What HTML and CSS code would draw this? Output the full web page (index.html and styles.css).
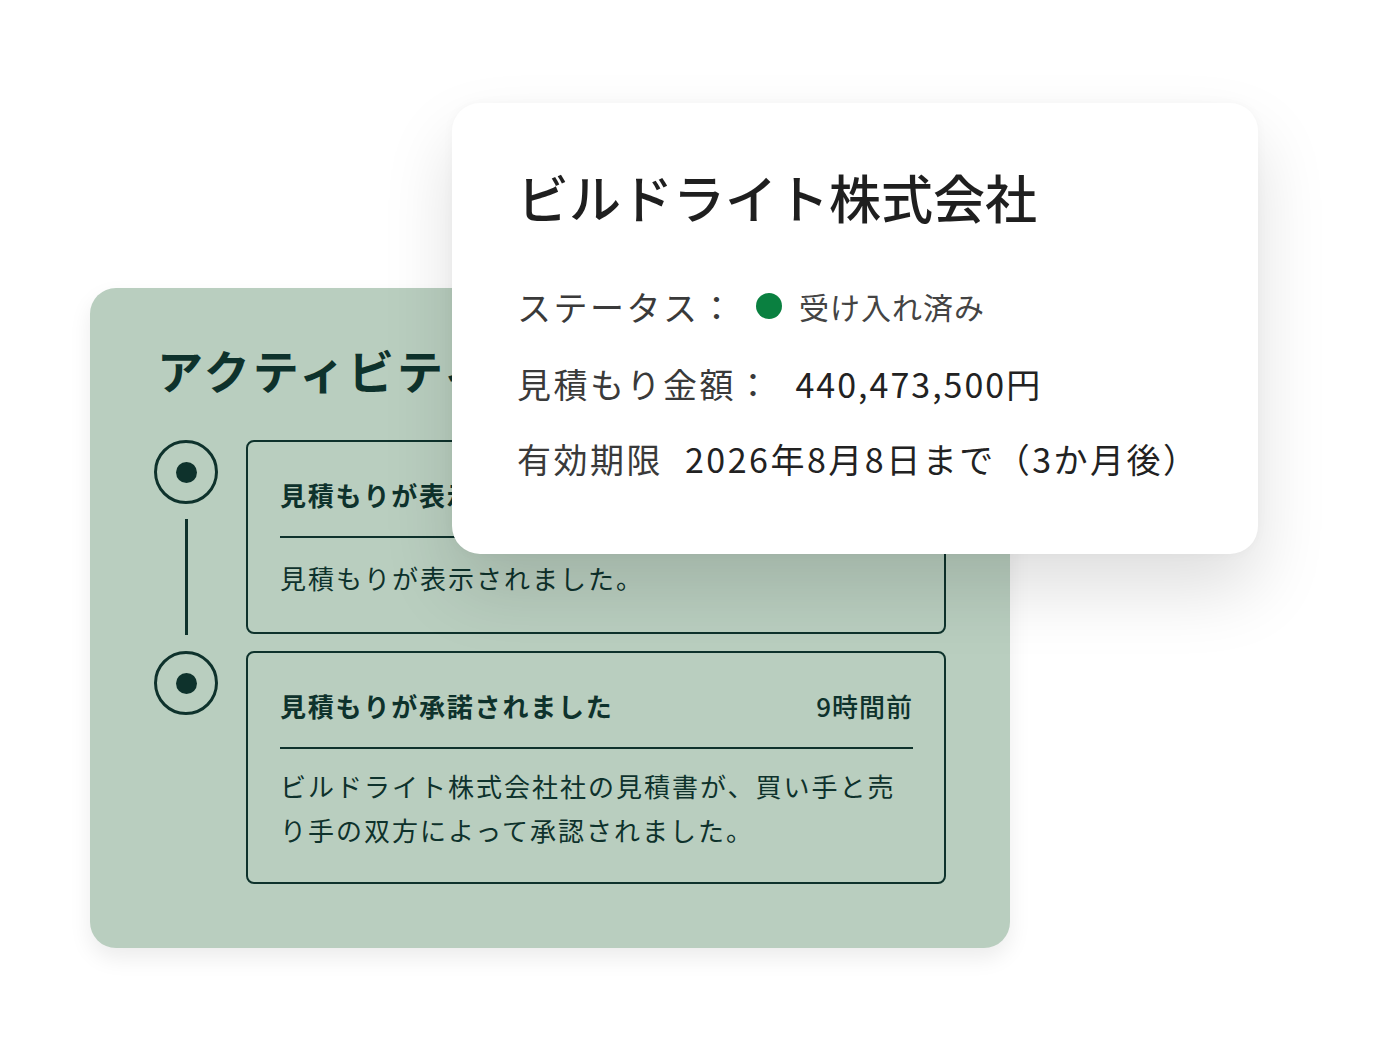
FILE: index.html
```html
<!DOCTYPE html>
<html lang="ja">
<head>
<meta charset="utf-8">
<title>見積もり</title>
<link rel="stylesheet" href="styles.css">
</head>
<body>
<div class="stage">
  <section class="activity">
    <h2 class="activity-title">アクティビティ</h2>
    <div class="timeline">
      <div class="tl-row">
        <div class="tl-marker">
          <span class="tl-dot"></span>
          <span class="tl-line"></span>
        </div>
        <div class="tl-card tl-card--single">
          <div class="tl-head">
            <span class="tl-head-title">見積もりが表示されました</span>
          </div>
          <p class="tl-body">見積もりが表示されました。</p>
        </div>
      </div>
      <div class="tl-row">
        <div class="tl-marker">
          <span class="tl-dot"></span>
        </div>
        <div class="tl-card">
          <div class="tl-head">
            <span class="tl-head-title">見積もりが承諾されました</span>
            <span class="tl-time">9時間前</span>
          </div>
          <p class="tl-body">ビルドライト株式会社社の見積書が、買い手と売り手の双方によって承認されました。</p>
        </div>
      </div>
    </div>
  </section>

  <section class="quote">
    <h1 class="quote-title">ビルドライト株式会社</h1>
    <div class="quote-row">
      <span class="q-label">ステータス：</span>
      <span class="status"><span class="status-dot"></span>受け入れ済み</span>
    </div>
    <div class="quote-row quote-row--amount">
      <span class="q-label">見積もり金額：</span>
      <span class="q-value amount">440,473,500円</span>
    </div>
    <div class="quote-row">
      <span class="q-label">有効期限</span>
      <span class="q-value">2026年8月8日まで（3か月後）</span>
    </div>
  </section>
</div>
</body>
</html>
```

FILE: styles.css
```css
* {
  box-sizing: border-box;
}

html,
body {
  margin: 0;
  background: #ffffff;
}

body {
  font-family: "Noto Sans CJK JP", "Noto Sans", sans-serif;
}

.stage {
  position: relative;
  width: 1400px;
  height: 1050px;
  padding: 288px 0 0 90px;
}

/* Activity panel */
.activity {
  width: 920px;
  height: 660px;
  background: #b9cebf;
  border-radius: 26px;
  padding: 48px 64px 64px 67px;
  color: #0e322c;
  box-shadow: 0 10px 22px rgba(0, 0, 0, 0.08);
}

.activity-title {
  margin: 0 0 38px;
  font-size: 46px;
  line-height: 66px;
  font-weight: 700;
  letter-spacing: 3px;
}

.timeline {
  display: flex;
  flex-direction: column;
  gap: 17px;
  margin-left: -3px;
}

.tl-row {
  display: flex;
  gap: 28px;
}

.tl-marker {
  width: 64px;
  flex: none;
  display: flex;
  flex-direction: column;
  align-items: center;
}

.tl-dot {
  width: 64px;
  height: 64px;
  border: 3px solid #0e322c;
  border-radius: 50%;
  display: flex;
  align-items: center;
  justify-content: center;
  flex: none;
}

.tl-dot::after {
  content: "";
  width: 21px;
  height: 21px;
  border-radius: 50%;
  background: #0e322c;
}

.tl-line {
  flex: 1;
  width: 3px;
  background: #0e322c;
  margin: 15px 0 -1px;
}

.tl-card {
  flex: 1;
  border: 2px solid #0e322c;
  border-radius: 8px;
  padding: 35px 31px 30px 32px;
}

.tl-card--single {
  padding-bottom: 32px;
}

.tl-card--single .tl-body {
  margin-top: 18px;
}

.tl-head {
  display: flex;
  justify-content: space-between;
  align-items: center;
  padding-bottom: 23px;
  border-bottom: 2px solid #0e322c;
  font-size: 26px;
  line-height: 36px;
  letter-spacing: 1.8px;
}

.tl-head-title {
  font-weight: 700;
}

.tl-time {
  font-weight: 500;
  letter-spacing: 1px;
}

.tl-body {
  margin: 15px 0 0;
  font-size: 26px;
  line-height: 44px;
  letter-spacing: 2px;
}

/* Quote summary card, floating over the panel */
.quote {
  position: absolute;
  left: 452px;
  top: 103px;
  width: 806px;
  height: 451px;
  background: #ffffff;
  border-radius: 28px;
  padding: 57px 40px 0 65px;
  box-shadow: 0 36px 70px rgba(0, 0, 0, 0.13), 0 0 12px rgba(0, 0, 0, 0.03);
  color: #333333;
}

.quote-title {
  margin: 0 0 34px;
  font-size: 52px;
  line-height: 74px;
  font-weight: 500;
  color: #1f1f1f;
  letter-spacing: 0;
}

.quote-row {
  display: flex;
  align-items: center;
  height: 76px;
  font-size: 34px;
  letter-spacing: 2.5px;
}

.quote-row--amount {
  padding-top: 3px;
}

.q-label {
  color: #3a3a3a;
  margin-right: 22px;
}

.q-value {
  color: #222222;
  letter-spacing: 2.5px;
}

.amount {
  margin-left: 1px;
  letter-spacing: 2px;
}

.status {
  display: flex;
  align-items: center;
  font-size: 30px;
  color: #444444;
  letter-spacing: 1px;
  margin-left: -2px;
}

.status-dot {
  width: 26px;
  height: 26px;
  border-radius: 50%;
  background: #0a8040;
  margin-right: 17px;
}
```
